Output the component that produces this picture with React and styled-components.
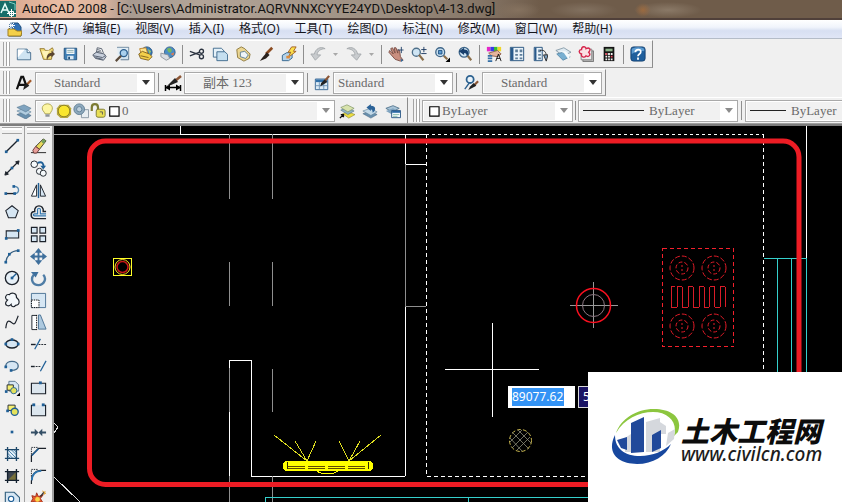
import React from 'react';
import styled, { createGlobalStyle, css } from 'styled-components';

const GlobalStyle = createGlobalStyle`
  * { box-sizing: border-box; }
  html, body, #root { margin: 0; height: 100%; }
  body {
    overflow: hidden;
    background: #f0f0f0;
    font-family: "Noto Sans CJK SC", "Noto Sans", sans-serif;
    font-size: 12px;
    color: #1a1a1a;
  }
`;

const Window = styled.div`
  display: flex;
  flex-direction: column;
  height: 100vh;
  min-height: 400px;
`;

const TitleBar = styled.header`
  display: flex;
  align-items: center;
  gap: 6px;
  height: 20px;
  flex: none;
  border-bottom: 2px solid #50403a;
  background:
    radial-gradient(ellipse 22px 8px at 518px 10px, #85725f, transparent),
    radial-gradient(ellipse 34px 8px at 584px 10px, #827160, transparent),
    radial-gradient(ellipse 8px 7px at 643px 10px, #9a6a40, transparent),
    radial-gradient(ellipse 34px 8px at 668px 10px, #8a7967, transparent),
    linear-gradient(90deg, #d8a68d 0, #e9bda4 60px, #dfb59e 100px, #a89a90 130px, #b3a598 200px, #9d8f82 380px, #857566 480px, #6f5c4a 540px);
`;

const Title = styled.h1`
  margin: 0;
  font: 400 13px/18px Roboto, "Open Sans", sans-serif;
  color: #111;
  white-space: nowrap;
`;

const MenuBar = styled.nav`
  display: flex;
  align-items: center;
  gap: 15px;
  height: 19px;
  flex: none;
  padding-left: 7px;
  background: linear-gradient(#ffffff, #f0f4fb 40%, #d7dff2 60%, #e0e6f6);
  border-bottom: 1px solid #b4bcc8;
`;

const DocIcon = styled.span`
  display: flex;
  margin-right: -7px;
`;

const MenuItem = styled.button`
  border: 0;
  padding: 0;
  background: none;
  font: 12px/18px "Noto Sans", "Noto Sans CJK SC", sans-serif;
  color: #15151c;
  white-space: nowrap;
`;

const Dock = styled.div`
  display: flex;
  height: ${(p) => p.$h}px;
  flex: none;
  overflow: hidden;
  padding-top: 1px;
`;

const Toolbar = styled.div`
  display: flex;
  align-items: center;
  flex: ${(p) => (p.$grow ? '1 0 auto' : 'none')};
  height: 100%;
  border-top: 1px solid #ffffff;
  border-bottom: 1px solid #a0a0a0;
  border-right: ${(p) => (p.$grow ? 0 : 1)}px solid #8c8c8c;
  padding-right: ${(p) => (p.$grow ? 0 : 3)}px;
  padding-left: ${(p) => (p.$grow ? 2 : 0)}px;
`;

const Grip = styled.span`
  flex: none;
  border: 0 solid #a4a4a4;
  background: #ffffff;
  ${(p) =>
    p.$across
      ? css`
          height: 7px;
          margin: 1px 2px;
          border-width: 1px 0;
          box-shadow: inset 0 2px #fff, inset 0 -3px #f0f0f0, inset 0 3px #a4a4a4;
        `
      : css`
          width: 7px;
          align-self: stretch;
          margin: 1px 2px 1px 3px;
          border-width: 0 1px;
          box-shadow: inset 2px 0 #f4f4f4, inset 3px 0 #a4a4a4;
        `}
`;

const Separator = styled.span`
  flex: none;
  width: 1px;
  height: 19px;
  margin: 0 ${(p) => p.$gap ?? 2}px 0 ${(p) => p.$gap ?? 3}px;
  background: #8e8e8e;
`;

const ToolButton = styled.button`
  display: grid;
  place-items: center;
  flex: none;
  width: ${(p) => p.$w ?? 23}px;
  height: 22px;
  padding: 0;
  border: 0;
  background: none;
`;

const Combo = styled.label`
  display: flex;
  align-items: center;
  flex: none;
  width: ${(p) => p.$w}px;
  height: 22px;
  border: 1px solid #a9a9a9;
  box-shadow: inset 0 0 0 1px #fff;
  background: #f1f1f1;
  padding-left: ${(p) => p.$pad ?? 4}px;
  gap: 1px;
`;

const Select = styled.select`
  appearance: none;
  flex: 1;
  min-width: 0;
  border: 0;
  padding: 0;
  margin: 0;
  outline: 0;
  background: none;
  font: 13px/18px "Liberation Serif", "Noto Sans CJK SC", serif;
  color: #6a6a6a;
`;

const Drop = styled.span`
  display: grid;
  place-items: center;
  flex: none;
  width: 17px;
  height: 20px;
  background: #ffffff;
`;

const LineSample = styled.span`
  flex: none;
  width: ${(p) => p.$w}px;
  height: 1px;
  margin-right: 4px;
  background: #222;
`;

const Workspace = styled.main`
  display: flex;
  flex: 1;
  min-height: 0;
  border-top: 2px solid #7d7d7d;
`;

const ToolColumn = styled.div`
  display: flex;
  flex-direction: column;
  align-items: stretch;
  flex: none;
  width: ${(p) => p.$w}px;
  overflow: hidden;
  background: #f0f0f0;
  border-right: ${(p) => p.$edge ?? 1}px solid #a0a0a0;
  & > button { width: 24px; margin-left: ${(p) => p.$indent ?? 0}px; }
`;

const Canvas = styled.section`
  position: relative;
  flex: 1;
  min-width: 0;
  background: #000;
  overflow: hidden;
`;

const Drawing = styled.svg`
  display: block;
  width: 100%;
  height: 100%;
`;

const DynamicInput = styled.form`
  position: absolute;
  left: 454px;
  top: 260px;
  display: flex;
  gap: 3px;
`;

const Coordinate = styled.input`
  width: ${(p) => (p.$active ? 59 : 58)}px;
  height: 18px;
  margin: 0;
  padding: 0;
  border: 0;
  outline: 0;
  font: 12px/18px "Noto Sans", sans-serif;
  color: #fff;
  background: ${(p) => (p.$active ? 'linear-gradient(90deg, #3393f5 52px, #fff 52px)' : '#1b1464')};
`;

const CoordinateBox = styled.span`
  display: flex;
  padding: 2px 4px;
  background: ${(p) => (p.$active ? '#fff' : '#1b1464')};
  border: ${(p) => (p.$active ? 0 : 1)}px solid #d8d8d8;
  height: 22px;
  align-items: center;
`;

const Sponsor = styled.aside`
  position: absolute;
  right: 0;
  bottom: 0;
  display: flex;
  align-items: center;
  width: 254px;
  height: 130px;
  padding: 0 0 2px 23px;
  background: #fff;
`;

const SponsorText = styled.div`
  display: flex;
  flex-direction: column;
  padding-top: 8px;
  color: #0c0c0c;
  white-space: nowrap;
`;

const SponsorName = styled.strong`
  font: italic 900 28px/28px "Noto Sans CJK SC", sans-serif;
`;

const SponsorLink = styled.a`
  font: italic 500 19px/20px "Noto Sans", sans-serif;
  color: #1c1c1c;
  text-decoration: none;
`;

const B = '#1f5f96';
const K = '#1c222b';
const sheet = '#d6e6f3';

const Dot = ({ x, y }) => <rect x={x - 1.5} y={y - 1.5} width="3" height="3" fill={B} stroke="none" />;

const icons = {
  newFile: (
    <g>
      <path d="M1.500 3.500h11l4 4v8h-15z" fill="#cfe4f2" stroke="#42698b" />
      <path d="M2 4h8l-8 9z" fill="#fff" />
      <path d="M12.500 3.500v4h4" fill="#f5fbff" stroke="#42698b" />
    </g>
  ),
  open: (
    <g>
      <path d="M1 3h5l1 2h4l4-3 1 2-2 11H5z" fill="#f2dc7a" stroke="#91742a" />
      <path d="M3 6l9-1-5 10z" fill="#fff3b8" />
      <path d="M9 16c-1-5 1-8 5-8V5l4 4-4 4v-2c-2 0-4 2-5 5z" fill="#5a4630" />
    </g>
  ),
  save: (
    <g>
      <path d="M2.500 2.500h14v13h-13l-1-1z" fill="#3f7fb5" stroke="#1e4e79" />
      <path d="M5 3h9v6H5z" fill="#f4f8fb" />
      <path d="M6 5h7M6 7h7" stroke="#8aa" />
      <path d="M6 11h7v4H6z" fill="#d9e8f2" /><path d="M7 12h2v3H7z" fill="#1e4e79" />
    </g>
  ),
  plot: (
    <g stroke="#4c5666">
      <path d="M6 8l1-6 5 1 2 5" fill="#fff" />
      <path d="M2 10l4-3 9 2 2 3-3 4-9-2z" fill="#c9d1de" />
      <path d="M3 11l10 2 3-2M5 13l8 2" fill="none" /><path d="M7 4l4 1M7 6l5 1" />
    </g>
  ),
  preview: (
    <g>
      <path d="M3.500 1.500h13v14h-9" fill="#d3e3ee" stroke="#55718a" />
      <path d="M4 2h12v9H4z" fill="#e1edf5" />
      <circle cx="11" cy="8" r="4" fill="#a9d0ed" stroke="#2d5f8e" strokeWidth="1.500" />
      <path d="M8 11l-6 6" stroke="#5b4b3b" strokeWidth="2.500" />
    </g>
  ),
  publish: (
    <g>
      <circle cx="11" cy="7" r="6" fill="#387dbb" stroke="#1f4c7c" />
      <path d="M3 3l7-1 2 6-7 2z" fill="#ffe38a" stroke="#ba8028" />
      <path d="M2 9l4-3 8 3 3 3-4 4-9-2z" fill="#f3cf4a" stroke="#7b5c1c" />
      <path d="M4 11l9 2" stroke="#7b5c1c" /><path d="M12 3l4 3-2 3z" fill="#95c16a" />
    </g>
  ),
  web: (
    <g>
      <circle cx="11" cy="7" r="6" fill="#4a8dc6" stroke="#2d5d8b" />
      <path d="M8 3c3-2 6 0 5 3s-5 1-5-3z" fill="#79b85c" /><path d="M12 9l4-2-1 4z" fill="#e07b50" />
      <path d="M1 8l8 2 2 4-4 2-6-4z" fill="#d9dde2" stroke="#8b939c" />
    </g>
  ),
  cut: (
    <g fill="none" stroke="#2b3340" strokeWidth="1.500">
      <path d="M1 6l11 4M1 11l11-4" /><circle cx="14" cy="6" r="2.300" /><circle cx="14" cy="12" r="2.300" />
    </g>
  ),
  copyClip: (
    <g stroke="#386488">
      <path d="M1.500 2.500h9l3 3v7h-12z" fill="#e5f1f9" /><path d="M5.500 6.500h9l3 3v7h-12z" fill="#c5dff0" />
    </g>
  ),
  paste: (
    <g>
      <path d="M2 4l5-3 4 2 6 6-1 5-6 3-7-4z" fill="#ecd691" stroke="#8a7436" />
      <path d="M6 7l5-1 4 4-3 4-6-2z" fill="#eef4f8" stroke="#56788f" />
    </g>
  ),
  brush: (
    <g>
      <path d="M16 2l-7 7" stroke="#8b4b21" strokeWidth="3" /><path d="M10 7l3 3-4 4-7 3 3-4z" fill="#28201c" />
    </g>
  ),
  blockEdit: (
    <g>
      <path d="M1.500 10.500l5-3h6v6l-4 3h-7z" fill="#b5d4eb" stroke="#2b5f89" />
      <path d="M12 1l5 0-3 5h3l-9 7 3-6H8z" fill="#fbe04c" stroke="#a05b20" />
      <path d="M6 11h4v3H6z" fill="#e08a3a" />
    </g>
  ),
  undo: <path d="M17 3C12 0 6 3 5 9H1l5 7 6-6H8c0-4 4-7 9-7z" fill="#c8cbce" stroke="#a4a8ac" />,
  redo: <path d="M1 3c5-3 11 0 12 6h4l-5 7-6-6h4C10 6 6 3 1 3z" fill="#c8cbce" stroke="#a4a8ac" />,
  pan: (
    <g>
      <path d="M2 5l4 4-3-6 2-1 3 6-1-6 2 0 2 6V4l2 1 1 7 3 4-3 1-6-2-7-8z" fill="#c98f80" stroke="#784b42" />
      <path d="M15 1v7M11.500 4.500h6" stroke="#1d3e66" /><path d="M14 14l3 2-2 2z" fill="#316c9e" />
    </g>
  ),
  zoomReal: (
    <g>
      <circle cx="6" cy="7" r="4.500" fill="#cfe5f4" stroke="#4e6f89" strokeWidth="1.500" />
      <path d="M9 10l5 6" stroke="#8a6e4a" strokeWidth="2.500" />
      <path d="M14.500 1v6M11.500 4h6M11.500 8.500h6" stroke="#16345c" />
    </g>
  ),
  zoomWindow: (
    <g>
      <circle cx="7" cy="7" r="5" fill="#cfe5f4" stroke="#3f6689" strokeWidth="1.500" />
      <path d="M5 5h4v4H5z" fill="#5d9bd0" stroke="#1c4d7e" /><path d="M11 11l4 4" stroke="#8a6e4a" strokeWidth="2.500" />
      <path d="M18 13v5h-5z" fill="#000" />
    </g>
  ),
  zoomPrev: (
    <g>
      <circle cx="8" cy="7" r="5.500" fill="#cfe5f4" stroke="#3f6689" strokeWidth="1.500" />
      <path d="M12 11l4 5" stroke="#8a6e4a" strokeWidth="2.500" /><path d="M2 6l6-4v2c5 0 6 4 3 8 0-3-1-4-3-4v2z" fill="#173f6d" />
    </g>
  ),
  properties: (
    <g>
      <path d="M1 1h4v5H1z" fill="#e428c8" /><path d="M5 1h4v5H5z" fill="#3838e8" /><path d="M9 1h4v5H9z" fill="#35c035" /><path d="M13 1h4v5h-4z" fill="#f0d528" />
      <path d="M3 8l10-3 4 4-4 3-7-1z" fill="#e5b49c" stroke="#8b5b4b" />
      <path d="M2 11h5M2 14h5M2 17h5" stroke="#356fa6" strokeWidth="2" /><path d="M11 17l3-8 3 8M12 14h4" stroke="#111" fill="none" />
    </g>
  ),
  designCenter: (
    <g>
      <path d="M1.500 1.500h15v15h-15z" fill="#eaf3fa" stroke="#1b4976" /><path d="M2 2h3v14H2z" fill="#27598b" />
      <path d="M7 4h3v3H7zM12 4h3v3h-3zM7 9h3v2H7zM12 9h3v2h-3zM7 13h3v2H7zM12 13h3v2h-3z" fill="#5f7f9b" />
    </g>
  ),
  palettes: (
    <g>
      <path d="M2.500 1.500h9v15h-9z" fill="#eaf3fa" stroke="#1b4976" /><path d="M3 2h2v14H3z" fill="#27598b" />
      <path d="M7 4h3v3H7zM7 9h3v2H7zM7 13h3v2H7z" fill="#5f7f9b" />
      <path d="M9 5c5-1 7 2 7 6" stroke="#222" fill="none" /><path d="M13 10h5l-2 7z" fill="#7fa3c4" stroke="#222" />
    </g>
  ),
  sheetSet: (
    <g>
      <path d="M1 5l9-3 8 5-9 4z" fill="#dfeaf1" stroke="#8398a6" /><path d="M2 9l7-2 8 5-8 4z" fill="#78afd1" stroke="#5b8ba9" />
      <path d="M5 6l5 2 5 7 2-4-5-5z" fill="#f5fafc" />
    </g>
  ),
  markup: (
    <g>
      <path d="M5.500 5.500h12v12h-12z" fill="#b8b8b8" stroke="#707070" /><path d="M3.500 3.500h12v12h-12z" fill="#ececec" stroke="#808080" />
      <path d="M4 9c-4-1-3-5 0-5 0-4 5-4 5-1 4-2 6 1 3 4 3 3 0 6-3 4-2 3-6 1-5-2z" fill="#fae1e4" stroke="#d5254b" strokeWidth="1.500" />
    </g>
  ),
  calc: (
    <g>
      <path d="M3 1h12v16H3z" fill="#151515" /><path d="M5 3h8v3H5z" fill="#8fb68c" />
      <path d="M5 8h2v2H5zM8 8h2v2H8zM11 8h2v2h-2zM5 11h2v2H5zM8 11h2v2H8z M5 14h2v2H5zM8 14h2v2H8zM11 14h2v2h-2z" fill="#f4f4f4" />
      <path d="M11 11h2v2h-2zM5 8h2v2H5z" fill="#d45" />
    </g>
  ),
  help: (
    <g>
      <rect x="1" y="1" width="16" height="16" rx="3" fill="#1f5f9d" stroke="#133f6f" />
      <path d="M2 3c5-2 10-2 14 0v3C11 5 6 6 2 9z" fill="#5d9bcf" />
      <path d="M6 7c0-4 7-4 6 0 0 2-3 2-3 4.500M9 13v2.500" fill="none" stroke="#fff" strokeWidth="2" />
    </g>
  ),
  textStyle: (
    <g>
      <path d="M1 16L6 2h2l4 11M3 11h7" fill="none" stroke="#111" strokeWidth="2.500" />
      <path d="M17 6l-5 5" stroke="#a25a2b" strokeWidth="2.500" /><path d="M12 9l3 3-7 5 1-4z" fill="#222" />
    </g>
  ),
  dimStyle: (
    <g>
      <path d="M1 13.500h16M1.500 11v6M16.500 11v6" stroke="#000" strokeWidth="1.500" /><path d="M1 13.500l5-3v6zM17 13.500l-5-3v6z" fill="#000" />
      <path d="M17 2l-6 5" stroke="#8c5635" strokeWidth="2.500" /><path d="M11 4l3 4-7 3-4 1z" fill="#222" />
    </g>
  ),
  tableStyle: (
    <g>
      <path d="M1.500 4.500h14v12h-14z" fill="#dcebf6" stroke="#2f608e" /><path d="M2 5h13v3H2z" fill="#2f6fa8" />
      <path d="M2 12h13M6 8v8M11 8v8" stroke="#6e93b4" /><path d="M17 1l-5 6" stroke="#8c5635" strokeWidth="2.500" /><path d="M12 5l3 3-8 5 1-4z" fill="#222" />
    </g>
  ),
  leaderStyle: (
    <g>
      <circle cx="8" cy="5" r="4" fill="#e9f3fa" stroke="#2d6290" strokeWidth="2" /><path d="M7 9l-5 7" stroke="#2d6290" strokeWidth="1.500" />
      <path d="M17 7l-5 5" stroke="#8c5635" strokeWidth="2.500" /><path d="M12 9l3 3-9 5 2-4z" fill="#222" />
    </g>
  ),
  layers: (
    <g strokeWidth=".6">
      <path d="M1 13l8-3 8 4-6 4z" fill="#6990ae" stroke="#44657e" /><path d="M1 9l8-3 8 4-6 4z" fill="#b2cde0" stroke="#54758e" /><path d="M1 5l8-3 8 4-6 4z" fill="#7fa3bf" stroke="#54758e" />
    </g>
  ),
  layerCurrent: (
    <g strokeWidth=".6">
      <path d="M4 12l6-2 8 3-7 4z" fill="#ecdd3f" stroke="#7d7a28" /><path d="M2 8l7-3 8 4-7 4z" fill="#8fb3c4" stroke="#42667c" /><path d="M2 5l7-3 8 4-7 4z" fill="#d8e3ad" stroke="#667f4e" />
      <path d="M1 17l4-4M2 13h3v3" stroke="#111" strokeWidth="1.500" fill="none" />
    </g>
  ),
  layerPrev: (
    <g strokeWidth=".6">
      <path d="M1 12l8-3 8 4-7 4z" fill="#6990ae" stroke="#44657e" /><path d="M1 9l8-3 8 4-7 4z" fill="#c2d9e8" stroke="#54758e" />
      <path d="M5 5l5-4v2c6 0 6 5 2 8 0-3-1-4-2-4v2z" fill="#2c6398" />
    </g>
  ),
  layerStates: (
    <g>
      <path d="M1 6l8-3 7 3-8 4z" fill="#a8c4d8" stroke="#54758e" /><path d="M1 9l8-3 7 4-8 3z" fill="#7fa3bf" />
      <path d="M7.500 8.500h10v8h-10z" fill="#f2f8fc" stroke="#1f4e7e" /><path d="M8 9h9v2H8z" fill="#2966a3" /><path d="M9 13h7M9 15h5" stroke="#8ba" />
    </g>
  ),
  bulb: (
    <g>
      <path d="M5 11c-5-5-1-10 4-10s8 5 4 10l-1 2H6z" fill="#fdf6a3" stroke="#a49b45" /><path d="M6.500 13.500h5v3h-5z" fill="#8f949a" />
    </g>
  ),
  sun: (
    <g>
      <path d="M4 2h10l3 4v7l-4 4H5l-4-4V6z" fill="#b5a640" /><circle cx="9" cy="9" r="6.500" fill="#f9e62f" stroke="#8a7d22" />
    </g>
  ),
  freeze: (
    <g>
      <path d="M9.500 7.500h8v9h-8z" fill="#e8eef2" stroke="#8594a0" /><circle cx="7" cy="7" r="6" fill="#8ea9bd" stroke="#5c7c94" /><circle cx="7" cy="7" r="3" fill="#bed0dd" stroke="#5c7c94" />
    </g>
  ),
  lock: (
    <g>
      <path d="M2 9V5c0-5 7-5 7 0v4" fill="none" stroke="#7b7a32" strokeWidth="2.500" /><rect x="7" y="7" width="10" height="9" rx="2" fill="#e9df55" stroke="#77742c" /><path d="M11 10h3v3" stroke="#555" fill="none" />
    </g>
  ),
  swatch: <path d="M3.500 3.500h12v12h-12z" fill="#fff" stroke="#000" strokeWidth="1.500" />,

  line: <g stroke={K}><path d="M3 15L15 3" strokeWidth="1.500" /><Dot x={2.500} y={15.500} /><Dot x={15.500} y={2.500} /></g>,
  xline: <g stroke={K} strokeWidth="1.300"><path d="M2 16L16 2" /><path d="M1 17l1-4 3 3zM17 1l-1 4-3-3z" fill={K} strokeWidth="1" /><Dot x={9} y={9} /></g>,
  polyline: <g fill="none" stroke={K}><path d="M2 13h10" strokeWidth="1.500" /><path d="M11 5c7 0 7 8 1 8" stroke="#5486ae" strokeWidth="1.500" /><Dot x={2} y={13} /><Dot x={12} y={13} /><Dot x={11} y={5} /></g>,
  polygon: <path d="M9 2l7 5.500-3 8H5L2 7.500z" fill={sheet} stroke={K} strokeWidth="1.200" />,
  rectangle: <g><path d="M2.500 5.500h14v8h-14z" fill={sheet} stroke={K} strokeWidth="1.200" /><Dot x={2.500} y={14} /><Dot x={16} y={5} /></g>,
  arc: <g fill="none" stroke={K}><path d="M2 16C3 9 8 3 16 3" strokeWidth="1.500" stroke="#355e80" /><Dot x={2} y={16} /><Dot x={6} y={7} /><Dot x={16} y={3} /></g>,
  circle: <g><circle cx="9" cy="9" r="7.500" fill="#e7f0f7" stroke={K} strokeWidth="1.500" /><path d="M9 9l5-5" stroke={B} strokeWidth="1.500" /><Dot x={9} y={9} /></g>,
  cloud: <path d="M4 9C0 7 2 2 6 3c2-3 8-2 8 2-1 2 3 2 3 6s-3 4-4 4c-2 3-5 1-5-1-3 3-7 1-6-2 0-1 1-2 2-3z" fill="#f4f8fb" stroke={K} strokeWidth="1.300" />,
  spline: <path d="M2 16C3 6 6 7 9 10s4 0 7-8" fill="none" stroke={K} strokeWidth="1.400" />,
  ellipse: <g><ellipse cx="9" cy="9" rx="7" ry="4.500" fill={sheet} stroke={K} strokeWidth="1.500" /><Dot x={2} y={9} /><Dot x={9} y={4} /><Dot x={16} y={9} /></g>,
  ellipseArc: <g><path d="M2 9c0-7 14-7 14 0 0 4-4 5-8 5" fill={sheet} stroke="#466b89" strokeWidth="1.500" /><Dot x={2} y={10} /><Dot x={8} y={14} /></g>,
  insertBlock: (
    <g>
      <path d="M5.500 1.500h7l4 4v7h-11z" fill={sheet} stroke="#55718a" /><path d="M3.500 5.500h7v6h-7z" fill="#f6f070" stroke={K} /><circle cx="11" cy="12" r="3.500" fill="#e4e25c" stroke={B} /><Dot x={2.500} y={13} /><path d="M18 14v4h-4z" fill="#000" />
    </g>
  ),
  makeBlock: <g><path d="M4.500 3.500h8v6h-8z" fill="#f6f070" stroke={K} /><circle cx="12" cy="11" r="4" fill="#e4e25c" stroke={B} strokeWidth="1.500" /><Dot x={4} y={10} /></g>,
  point: <Dot x={9} y={9} />,
  hatch: <g><path d="M4 4h10v10H4z" fill="#e3eff7" /><path d="M4 8l6 6M4 4l10 10M8 4l6 6M11 4l3 3M4 11l3 3" stroke="#3a79a8" /><path d="M4 1v16M14 1v16M1 4h16M1 14h16" stroke="#1d4769" strokeWidth="1.500" /></g>,
  gradient: <g><path d="M4 4h10v10H4z" fill="#77703b" /><path d="M4 4h10L4 14z" fill="#3d4550" /><path d="M4 1v16M14 1v16M1 4h16M1 14h16" stroke="#14212f" strokeWidth="1.500" /></g>,
  region: <g><path d="M1.500 2.500h10l6 6v8h-16z" fill={sheet} stroke="#35617f" strokeWidth="1.300" /><circle cx="8" cy="10" r="3" fill="#fff" stroke={B} strokeWidth="1.300" /></g>,

  erase: <g><path d="M1 15.500h16" stroke="#222" /><path d="M6 9l8-8 3 2-7 9z" fill="#e9d95b" stroke="#3b3b2a" /><path d="M6 9l4 3-3 4H4l-1-3z" fill="#e9a09b" stroke="#6b3532" /><path d="M12 4l2 2 3-3-3-2z" fill="#72a05d" /></g>,
  copy: <g fill="#f5f9fb" stroke={K}><circle cx="4.500" cy="4.500" r="3.500" /><circle cx="10" cy="12" r="3.200" /><circle cx="14" cy="14" r="3.200" /><path d="M8 3c5-2 7 1 6 5" fill="none" stroke={B} strokeWidth="2" /><path d="M11 6l6 0-3 4z" fill={B} stroke="none" /></g>,
  mirror: <g stroke={K}><path d="M7 3v12H1.500z" fill="#fff" /><path d="M11 3v12h5.500z" fill={sheet} /><path d="M9 1v16" stroke={B} strokeWidth="1.500" /></g>,
  offset: <g fill="none"><path d="M17 15.500H5C0 15 0 8 5 8c-1-8 10-8 9 0h3" stroke={K} strokeWidth="1.500" /><path d="M17 12.500H5c-2 0-2-2 0-2h3V6c0-2 3-2 3 0v4.500h6" stroke="#3478b0" strokeWidth="1.300" /></g>,
  array: <g fill={sheet} stroke={K} strokeWidth="1.200"><path d="M1.500 1.500h6v6h-6z" /><path d="M10.500 1.500h6v6h-6z" /><path d="M1.500 10.500h6v6h-6z" /><path d="M10.500 10.500h6v6h-6z" /></g>,
  move: <g fill="#3e6f9c"><path d="M9 0l4 5H5zM9 18l4-5H5zM0 9l5-4v8zM18 9l-5-4v8z" /><path d="M8 4h2v10H8zM4 8h10v2H4z" /></g>,
  rotate: <g><path d="M4 5C0 10 3 16 9 16s9-7 5-11" fill="none" stroke="#4f7da6" strokeWidth="2.500" /><path d="M1 2l8 0-3 6z" fill="#3e6f9c" /></g>,
  scale: <g><path d="M1.500 1.500h15v15h-15z" fill={sheet} stroke="#4b7395" /><path d="M1.500 8.500h8v8h-8z" fill="#fff" stroke="#000" strokeDasharray="1.500 1" /></g>,
  stretch: <g><path d="M7 1.500H2v15h5" fill="#fff" stroke={K} /><path d="M7 1v16" stroke="#000" strokeDasharray="1.500 1" /><path d="M9 1h2l6 15H9z" fill="#adc9df" stroke="#4b7395" /></g>,
  trim: <g><path d="M1 9h5" stroke={K} strokeWidth="1.500" /><path d="M9 9h8" stroke={K} strokeDasharray="2 1" /><path d="M5 14l6-11" stroke={B} strokeWidth="1.300" /></g>,
  extend: <g><path d="M1 9h4" stroke={K} strokeWidth="1.500" /><path d="M6 9h6" stroke={K} strokeDasharray="2 1" /><path d="M11 14l6-11" stroke={B} strokeWidth="1.300" /></g>,
  breakPoint: <g><path d="M1.500 3.500h15v11h-15z" fill="#dce6ee" stroke={K} strokeWidth="1.200" /><Dot x={11} y={3} /></g>,
  breakTwo: <g><path d="M4 3.500H1.500v11h15v-11H14" fill="#dce6ee" stroke={K} strokeWidth="1.200" /><Dot x={4} y={3} /><Dot x={14} y={3} /></g>,
  join: <g fill="#344f66"><path d="M1 8h4V5l4 4-4 4v-3H1zM17 8h-4V5L9 9l4 4v-3h4z" /></g>,
  chamfer: <g fill="none"><path d="M1.500 17v-7L9 2.500h8" stroke={K} strokeWidth="1.300" /><path d="M2 10L9 3" stroke={B} strokeWidth="1.500" /><path d="M1.500 9V1.500H8" stroke={K} strokeDasharray="1.500 1" /></g>,
  fillet: <g fill="none"><path d="M1.500 17v-3C2 7 6 3 11 2.500h6" stroke={K} strokeWidth="1.300" /><path d="M2 13C2 7 6 3 12 3" stroke="#2d76b0" strokeWidth="2" /><path d="M1.500 9V1.500H8" stroke={K} strokeDasharray="1.500 1" /></g>,
  explode: <g><path d="M2 6l4 1 1-4 2 4 5-2-3 4 3 5-5-2-2 4-2-4-4 1 2-4z" fill="#e65b2b" stroke="#a22f1c" /><circle cx="8" cy="10" r="2.500" fill="#f9d74a" /><path d="M11 7l4-5" stroke="#333" strokeWidth="1.500" /><path d="M13 1l4 3M16 1l-1 4" stroke="#e0a030" /></g>,
};

const Icon = ({ name, size = 18 }) => (
  <svg width={size} height={size} viewBox="0 0 18 18" fill="none" aria-hidden="true">
    {icons[name]}
  </svg>
);

const DropArrow = ({ faint }) => (
  <svg width="8" height="5" viewBox="0 0 8 5" aria-hidden="true">
    <path d="M0 0h8L4 5z" fill={faint ? '#8c8c8c' : '#333'} />
  </svg>
);

const Picker = ({ label, value, w, pad, faint, children }) => (
  <Combo $w={w} $pad={pad}>
    {children}
    <Select aria-label={label} defaultValue={value}>
      <option>{value}</option>
    </Select>
    <Drop><DropArrow faint={faint} /></Drop>
  </Combo>
);

const standardGroups = [
  [['newFile', '新建'], ['open', '打开'], ['save', '保存']],
  [['plot', '打印'], ['preview', '打印预览'], ['publish', '发布'], ['web', '三维 DWF']],
  [['cut', '剪切'], ['copyClip', '复制'], ['paste', '粘贴'], ['brush', '特性匹配'], ['blockEdit', '块编辑器']],
  [['undo', '放弃'], ['undoMore', '放弃列表'], ['redo', '重做'], ['redoMore', '重做列表']],
  [['pan', '平移'], ['zoomReal', '实时缩放'], ['zoomWindow', '窗口缩放'], ['zoomPrev', '缩放上一个']],
  [['properties', '特性'], ['designCenter', '设计中心'], ['palettes', '工具选项板'], ['sheetSet', '图纸集'], ['markup', '标记集'], ['calc', '计算器']],
  [['help', '帮助']],
];

const menus = ['文件(F)', '编辑(E)', '视图(V)', '插入(I)', '格式(O)', '工具(T)', '绘图(D)', '标注(N)', '修改(M)', '窗口(W)', '帮助(H)'];

const drawTools = ['line', 'xline', 'polyline', 'polygon', 'rectangle', 'arc', 'circle', 'cloud', 'spline', 'ellipse', 'ellipseArc', 'insertBlock', 'makeBlock', 'point', 'hatch', 'gradient', 'region'];
const modifyTools = ['erase', 'copy', 'mirror', 'offset', 'array', 'move', 'rotate', 'scale', 'stretch', 'trim', 'extend', 'breakPoint', 'breakTwo', 'join', 'chamfer', 'fillet', 'explode'];

const Burner = ({ x, y }) => (
  <g strokeDasharray="5 2">
    <circle cx={x} cy={y} r="12" />
    <circle cx={x} cy={y} r="6" strokeDasharray="4 2" />
    <path d={`M${x} ${y - 3}v6`} strokeDasharray="2 2" />
  </g>
);

const FloorPlan = () => (
  <Drawing viewBox="54 126 788 376" preserveAspectRatio="xMinYMin slice" fill="none" role="img" aria-label="平面图">
    <g shapeRendering="crispEdges">
      <g stroke="#fff">
        <path d="M180 134.500H426M180.500 126v8M405.500 134v30M405 164.500h22M405.500 306v170M405 476.500H251.500V360.500H229.500v8M229.500 412v64M806.500 126v132" />
        <path d="M426 134.500h338" strokeDasharray="3 3" />
        <path d="M426.500 134v342.500H764M763.500 134v342" strokeDasharray="4 3" />
      </g>
      <path d="M229.500 134v65M272.500 134v65M229.500 262v44M272.500 262v44M229.500 368v44M272.500 369v43M229.500 476v26M272.500 476v26M405.500 164v142M405 306.500h21" stroke="#8f8f8f" />
      <path d="M54 134.500h126" stroke="#a0a0a0" />
      <path d="M54 423l4 4-4 6M54 477l26 25" stroke="#ddd" />
      <path d="M764 258.500h43M777.500 258v130M791.500 258v130M806.500 258v130M265.500 502v-4.500H600M468.500 498v4" stroke="#35d0cc" />
    </g>
    <rect x="89.500" y="141" width="709.500" height="343.500" rx="16" stroke="#ed1c24" strokeWidth="5" />
    <g shapeRendering="crispEdges">
      <rect x="113.500" y="258.500" width="18" height="17" stroke="#ffff28" />
      <path d="M492.500 323v94M445 369.500h94" stroke="#fff" />
      <path d="M593.500 282v46M570 305.500h48" stroke="#999" />
      <rect x="662.500" y="248.500" width="71" height="98" stroke="#f3202c" strokeDasharray="4 3" />
      <path d="M671.500 287v20M671 286.500h4M671 307.500h6M677 286.500h5M682 307.500h6M688 286.500h5M693 307.500h6M699 286.500h5M704 307.500h5M710 286.500h5M715 307.500h5M720 286.500h5M725.500 287v20M677.500 287v20M682.500 287v20M688.500 287v20M693.500 287v20M699.500 287v20M704.500 287v20M709.500 287v20M714.500 287v20M720.500 287v20" stroke="#d81c28" />
      <g stroke="#ff0">
        <path d="M274 435l33 26M295 441l12 20M316 441l-9 20M381 435l-32 26M360 441l-11 20M339 441l10 20" stroke="#dede20" />
        <rect x="284" y="462" width="88" height="8" rx="3" fill="#ff0" strokeWidth="2" />
        <path d="M288 466.500h80M288 468.500h80" stroke="#604b00" strokeDasharray="17 3" />
        <path d="M287.500 462v7M368.500 462v7" stroke="#302800" />
        <path d="M317 471c5 4 15 4 21 0" />
      </g>
    </g>
    <circle cx="122.500" cy="267" r="7.500" stroke="#ffdf20" />
    <circle cx="122.500" cy="267" r="5.500" stroke="#c81818" strokeWidth="1.500" />
    <circle cx="593.500" cy="305.500" r="17" stroke="#fa1020" strokeWidth="1.500" />
    <circle cx="593.500" cy="305.500" r="11" stroke="#8b7680" />
    <g stroke="#e01c28">
      <Burner x={682} y={268} /><Burner x={714} y={268} /><Burner x={682} y={326} /><Burner x={714} y={326} />
    </g>
    <circle cx="520.500" cy="440.500" r="11" stroke="#cbb950" strokeDasharray="4 2" />
    <path d="M510 438l12 13M512 432l17 17M518 430l13 13M530 437l-13 13M528 432l-16 16M522 430l-12 12" stroke="#8d8d7a" strokeWidth=".8" />
  </Drawing>
);

const SponsorLogo = () => (
  <svg width="70" height="58" viewBox="611 407 70 58" aria-hidden="true">
    <path d="M616 433c5-14 20-24 38-24 18 0 29 9 24 23l-4 4c4-13-5-24-21-24-14 0-29 7-37 21z" fill="#8cc63f" />
    <path d="M646 422l14-4v34h-14zM660 422l6 4v8h-6zM668 433l7-4-1 10-8 7zM625 438l6-4v18h-6z" fill="#d5d8dd" />
    <path d="M631 423l13-6v35l-13 1zM617 440l10-3v13l-6-2zM652 435l9-5v18l-9 4z" fill="#21499a" />
    <path d="M615 435c0 14 10 21 25 21 13 0 24-5 31-12-5 12-18 20-34 20-19 0-31-11-22-29z" fill="#17479e" />
  </svg>
);

export default function App() {
  return (
    <Window>
      <GlobalStyle />
      <TitleBar>
        <svg width="16" height="16" viewBox="0 0 16 16" aria-hidden="true">
          <path d="M0 0h16v16H0z" fill="#176d68" />
          <path d="M1 12L5 3l4 9M3 9h5" stroke="#e9fffa" strokeWidth="1.500" fill="none" />
          <path d="M9 1l6 2v6" stroke="#7ad0c4" fill="none" />
          <path d="M9.500 10.500h4v4h-4zM7 12.500h9M11.500 8v8" stroke="#fff" fill="none" />
        </svg>
        <Title>AutoCAD 2008 - [C:\Users\Administrator.AQRVNNXCYYE24YD\Desktop\4-13.dwg]</Title>
      </TitleBar>

      <MenuBar>
        <DocIcon>
          <svg width="15" height="16" viewBox="0 0 15 16" aria-hidden="true">
            <path d="M3 2h8l3 4v9H2z" fill="#2f6fb4" stroke="#20507f" />
            <path d="M1 8h6l3 2h5l-1 5H1z" fill="#f4d04a" stroke="#a07f22" />
            <path d="M4 1v7M1 4.500h7M2 2l5 5M7 2L2 7" stroke="#f5f8fb" />
          </svg>
        </DocIcon>
        {menus.map((m) => <MenuItem key={m}>{m}</MenuItem>)}
      </MenuBar>

      <Dock $h={29}>
        <Toolbar>
          <Grip />
          {standardGroups.map((group, i) => (
            <React.Fragment key={group[0][0]}>
              {i > 0 && <Separator />}
              {group.map(([name, label]) =>
                name.endsWith('More') ? (
                  <ToolButton key={name} $w={13} aria-label={label}>
                    <svg width="5" height="3" viewBox="0 0 5 3"><path d="M0 0h5L2.500 3z" fill="#a8a8a8" /></svg>
                  </ToolButton>
                ) : (
                  <ToolButton key={name} aria-label={label}><Icon name={name} size={16} /></ToolButton>
                )
              )}
            </React.Fragment>
          ))}
        </Toolbar>
      </Dock>

      <Dock $h={28}>
        <Toolbar>
          <Grip />
          <ToolButton aria-label="文字样式"><Icon name="textStyle" size={16} /></ToolButton>
          <Picker label="文字样式" value="Standard" w={120} pad={18} />
          <Separator />
          <ToolButton aria-label="标注样式"><Icon name="dimStyle" /></ToolButton>
          <Picker label="标注样式" value="副本 123" w={120} pad={18} />
          <Separator />
          <ToolButton aria-label="表格样式"><Icon name="tableStyle" size={16} /></ToolButton>
          <Picker label="表格样式" value="Standard" w={120} />
          <Separator />
          <ToolButton aria-label="多重引线样式"><Icon name="leaderStyle" size={16} /></ToolButton>
          <Picker label="多重引线样式" value="Standard" w={120} pad={18} />
        </Toolbar>
      </Dock>

      <Dock $h={28}>
        <Toolbar>
          <Grip />
          <ToolButton aria-label="图层特性"><Icon name="layers" size={16} /></ToolButton>
          <Picker label="图层" value="0" w={300} faint>
            <Icon name="bulb" size={15} />
            <Icon name="sun" size={16} />
            <Icon name="freeze" size={16} />
            <Icon name="lock" size={16} />
            <Icon name="swatch" size={14} />
          </Picker>
          <ToolButton aria-label="置为当前"><Icon name="layerCurrent" size={16} /></ToolButton>
          <ToolButton aria-label="上一个图层"><Icon name="layerPrev" size={16} /></ToolButton>
          <ToolButton aria-label="图层状态"><Icon name="layerStates" size={16} /></ToolButton>
        </Toolbar>
        <Toolbar $grow>
          <Grip />
          <Picker label="颜色" value="ByLayer" w={151} faint>
            <Icon name="swatch" size={14} />
          </Picker>
          <Separator $gap={2} />
          <Picker label="线型" value="ByLayer" w={160} faint><LineSample $w={61} /></Picker>
          <Separator $gap={3} />
          <Picker label="线宽" value="ByLayer" w={160} faint><LineSample $w={36} /></Picker>
        </Toolbar>
      </Dock>

      <Workspace>
        <ToolColumn $w={25}>
          <Grip $across />
          {drawTools.map((t) => <ToolButton key={t} aria-label={t}><Icon name={t} size={16} /></ToolButton>)}
        </ToolColumn>
        <ToolColumn $w={29} $edge={2} $indent={1}>
          <Grip $across />
          {modifyTools.map((t) => <ToolButton key={t} aria-label={t}><Icon name={t} size={17} /></ToolButton>)}
        </ToolColumn>
        <Canvas>
          <FloorPlan />
          <DynamicInput onSubmit={(e) => e.preventDefault()}>
            <CoordinateBox $active>
              <Coordinate $active aria-label="X" defaultValue="89077.62" />
            </CoordinateBox>
            <CoordinateBox>
              <Coordinate aria-label="Y" defaultValue="5" />
            </CoordinateBox>
          </DynamicInput>
          <Sponsor>
            <SponsorLogo />
            <SponsorText>
              <SponsorName>土木工程网</SponsorName>
              <SponsorLink href="#">www.civilcn.com</SponsorLink>
            </SponsorText>
          </Sponsor>
        </Canvas>
      </Workspace>
    </Window>
  );
}
